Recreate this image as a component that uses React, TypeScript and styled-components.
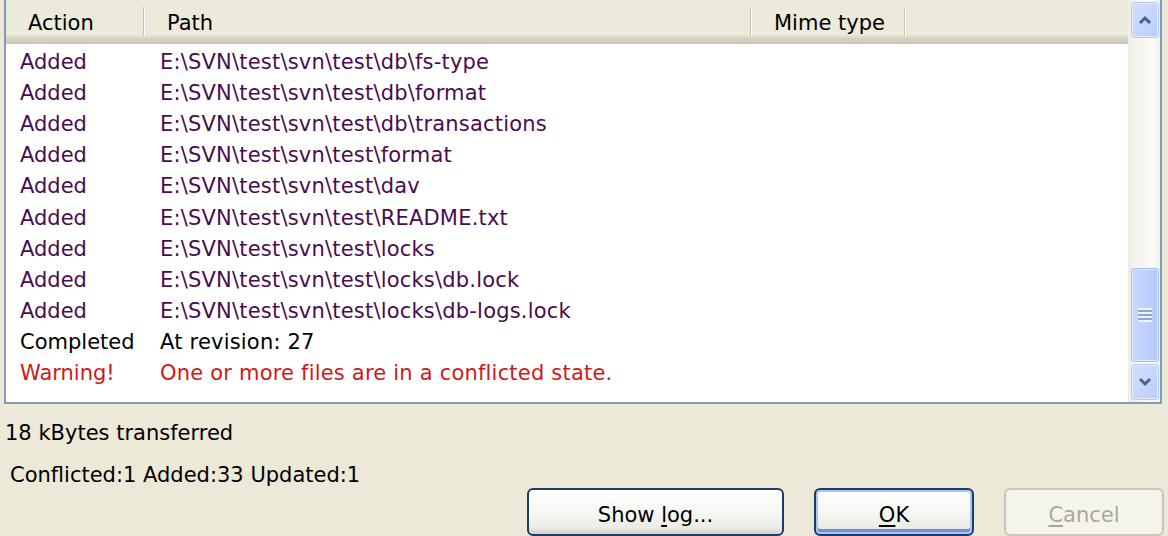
import React from "react";
import styled, { createGlobalStyle } from "styled-components";

const Global = createGlobalStyle`
  html, body { margin: 0; padding: 0; background: #ECE9D8; overflow: hidden; }
  body { font-family: "DejaVu Sans", Tahoma, sans-serif; }
`;

const Dialog = styled.div`
  width: 1168px;
  height: 536px;
  display: flex;
  flex-direction: column;
  background: #ECE9D8;
  font-size: 21px;
  color: #000;
`;

const ListBox = styled.div`
  margin: 0 6px 0 4px;
  display: flex;
  border: 2px solid #7F9DB9;
  border-top: none;
  background: #fff;
  box-sizing: border-box;
  height: 405px;
`;

const ListArea = styled.div`
  flex: 1;
  display: flex;
  flex-direction: column;
  min-width: 0;
`;

const Header = styled.div`
  height: 44px;
  display: flex;
  background: linear-gradient(to bottom, #EBEADB 0%, #EBEADB 78%, #E3E0D0 82%, #D6D2C2 88%, #CBC7B8 100%);
`;

const HeadCell = styled.div<{ $w?: number }>`
  ${(p) => (p.$w ? `width: ${p.$w}px;` : "flex: 1;")}
  position: relative;
  display: flex;
  align-items: center;
  padding: 2px 0 0 22px;
  box-sizing: border-box;
  white-space: nowrap;
  &::after {
    content: "";
    position: absolute;
    right: 0;
    top: 7px;
    bottom: 8px;
    width: 2px;
    background: linear-gradient(to right, #C7C5B2 50%, #FFFFFF 50%);
    display: ${(p) => (p.$w ? "block" : "none")};
  }
`;

const Rows = styled.div`
  display: flex;
  flex-direction: column;
  padding-top: 2px;
`;

const Row = styled.div<{ $color: string }>`
  height: 31.2px;
  display: flex;
  align-items: center;
  color: ${(p) => p.$color};
  white-space: nowrap;
`;

const ActionCell = styled.div`
  width: 139px;
  padding-left: 14px;
  box-sizing: border-box;
`;

const PathCell = styled.div`
  padding-left: 15px;
  letter-spacing: 0.2px;
`;

const Scrollbar = styled.div`
  width: 32px;
  display: flex;
  flex-direction: column;
  background: linear-gradient(to right, #EEEDE5 0%, #F4F3EC 20%, #F6F6F2 50%, #FDFDF4 75%, #F1F0EA 100%);
  padding: 2px 0 2px 2px;
  box-sizing: border-box;
`;

const ScrollButton = styled.div`
  height: 34px;
  margin: 0 1px 0 1px;
  border-radius: 3px;
  border: 1px solid #B7CAF5;
  background: linear-gradient(to bottom right, #D4E0FD, #B9CDFB);
  display: flex;
  align-items: center;
  justify-content: center;
  box-shadow: inset 0 0 0 1px #E2EAFE;
`;

const Track = styled.div`
  flex: 1;
  display: flex;
  flex-direction: column;
  justify-content: flex-end;
  padding-bottom: 2px;
`;

const Thumb = styled.div`
  height: 92px;
  margin: 0 1px;
  border-radius: 3px;
  border: 1px solid #A8BEF4;
  background: linear-gradient(to right, #C9D8FC, #BDD0FB 60%, #B3C8F8);
  box-shadow: inset 0 0 0 1px #DCE6FE;
  display: flex;
  align-items: center;
  justify-content: center;
`;

const Grip = styled.div`
  width: 14px;
  height: 14px;
  background: repeating-linear-gradient(to bottom, #EEF3FF 0px, #EEF3FF 2px, #8CA4DD 2px, #8CA4DD 4px);
`;

const Footer = styled.div`
  flex: 1;
  display: flex;
  flex-direction: column;
`;

const StatusLine = styled.div<{ $indent: number; $top: number }>`
  margin-top: ${(p) => p.$top}px;
  padding-left: ${(p) => p.$indent}px;
  height: 28px;
  line-height: 28px;
  white-space: nowrap;
`;

const ButtonRow = styled.div`
  margin-top: -1px;
  display: flex;
  justify-content: flex-end;
  gap: 30px;
  padding-right: 4px;
`;

const Button = styled.button<{ $w: number; $def?: boolean; $disabled?: boolean }>`
  width: ${(p) => p.$w}px;
  height: 48px;
  box-sizing: border-box;
  font-family: "DejaVu Sans", Tahoma, sans-serif;
  font-size: 21px;
  border-radius: 6px;
  border: 2px solid ${(p) => (p.$disabled ? "#C9C7BA" : "#1C3D6A")};
  color: ${(p) => (p.$disabled ? "#ACA899" : "#000")};
  background: ${(p) =>
    p.$disabled ? "#F5F4EA" : "linear-gradient(to bottom, #FFFFFF 0%, #F7F7F4 50%, #ECEBE6 85%, #D6D0C5 100%)"};
  box-shadow: ${(p) => (p.$def ? "inset 0 0 0 2px #A9C5F2, inset 0 -3px 0 2px #6D8EDB" : "none")};
  padding: 5px 0 0 0;
  display: flex;
  align-items: center;
  justify-content: center;
  white-space: pre;
`;

const Label = styled.span`
  white-space: pre;
`;

const U = styled.span`
  text-decoration: underline;
  text-underline-offset: 3px;
`;

type Entry = { action: string; path: string; kind: "added" | "done" | "warn" };

const colors = { added: "#4A0C50", done: "#000000", warn: "#D01818" };

const base = "E:\\SVN\\test\\svn\\test\\";
const entries: Entry[] = [
  { action: "Added", path: base + "db\\fs-type", kind: "added" },
  { action: "Added", path: base + "db\\format", kind: "added" },
  { action: "Added", path: base + "db\\transactions", kind: "added" },
  { action: "Added", path: base + "format", kind: "added" },
  { action: "Added", path: base + "dav", kind: "added" },
  { action: "Added", path: base + "README.txt", kind: "added" },
  { action: "Added", path: base + "locks", kind: "added" },
  { action: "Added", path: base + "locks\\db.lock", kind: "added" },
  { action: "Added", path: base + "locks\\db-logs.lock", kind: "added" },
  { action: "Completed", path: "At revision: 27", kind: "done" },
  { action: "Warning!", path: "One or more files are in a conflicted state.", kind: "warn" },
];

const Chevron = ({ up }: { up?: boolean }) => (
  <svg width="14" height="10" viewBox="0 0 14 10">
    <polyline
      points={up ? "2,8 7,3 12,8" : "2,2 7,7 12,2"}
      fill="none"
      stroke="#4D6185"
      strokeWidth="3"
    />
  </svg>
);

export default function App() {
  return (
    <>
      <Global />
      <Dialog>
        <ListBox>
          <ListArea>
            <Header>
              <HeadCell $w={139}>Action</HeadCell>
              <HeadCell $w={607}>Path</HeadCell>
              <HeadCell $w={154}>Mime type</HeadCell>
              <HeadCell />
            </Header>
            <Rows>
              {entries.map((e, i) => (
                <Row key={i} $color={colors[e.kind]}>
                  <ActionCell>{e.action}</ActionCell>
                  <PathCell>{e.path}</PathCell>
                </Row>
              ))}
            </Rows>
          </ListArea>
          <Scrollbar>
            <ScrollButton>
              <Chevron up />
            </ScrollButton>
            <Track>
              <Thumb>
                <Grip />
              </Thumb>
            </Track>
            <ScrollButton>
              <Chevron />
            </ScrollButton>
          </Scrollbar>
        </ListBox>
        <Footer>
          <StatusLine $indent={5} $top={15}>18 kBytes transferred</StatusLine>
          <StatusLine $indent={10} $top={14}>Conflicted:1 Added:33 Updated:1</StatusLine>
          <ButtonRow>
            <Button $w={257}>
              <Label>
                Show <U>l</U>og...
              </Label>
            </Button>
            <Button $w={160} $def>
              <Label>
                <U>O</U>K
              </Label>
            </Button>
            <Button $w={160} $disabled>
              <Label>
                <U>C</U>ancel
              </Label>
            </Button>
          </ButtonRow>
        </Footer>
      </Dialog>
    </>
  );
}
